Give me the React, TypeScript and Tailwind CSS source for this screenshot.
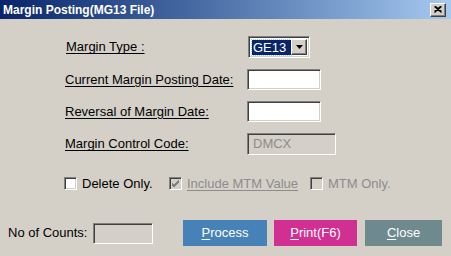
const sunken =
  'border border-t-[#808080] border-l-[#808080] border-r-white border-b-white shadow-[inset_1px_1px_0_#404040,inset_-1px_-1px_0_#d4d0c8]'
const raised =
  'border border-t-white border-l-white border-r-[#404040] border-b-[#404040] shadow-[inset_-1px_-1px_0_#808080]'

function Label({ children }: { children: React.ReactNode }) {
  return <span className="w-[182px] shrink-0 underline underline-offset-[2px]">{children}</span>
}

function Check({ checked, disabled, label, width }: { checked?: boolean; disabled?: boolean; label: string; width?: string }) {
  return (
    <div className={`flex items-center gap-[5px] ${width ?? ''}`}>
      <div className={`w-[13px] h-[13px] flex items-center justify-center ${sunken} ${disabled ? 'bg-[#d4d0c8]' : 'bg-white'}`}>
        {checked && (
          <svg width="9" height="9" viewBox="0 0 9 9">
            <path d="M1 4 L3 6 L8 1 M1 5 L3 7 L8 2 M1 6 L3 8 L8 3" stroke="#808080" strokeWidth="1" fill="none" />
          </svg>
        )}
      </div>
      <span className={disabled ? 'text-[#8c8c8c]' : 'text-black'}>
        {label === 'Include MTM Value' ? <span className="underline underline-offset-[2px]">{label}</span> : label}
      </span>
    </div>
  )
}

function Btn({ bg, k, rest, w }: { bg: string; k: string; rest: string; w: string }) {
  return (
    <button className={`${bg} ${w} h-[26px] text-white flex items-center justify-center text-[13px]`}>
      <span>
        <span className="underline underline-offset-[2px]">{k}</span>
        {rest}
      </span>
    </button>
  )
}

export default function App() {
  return (
    <div
      className="w-[451px] h-[256px] bg-[#d4d0c8] flex flex-col text-[13px] text-black overflow-hidden"
      style={{ fontFamily: '"Liberation Sans", Arial, sans-serif' }}
    >
      {/* title bar */}
      <div className="h-[19px] shrink-0 flex items-center justify-between pl-[3px] pr-[5px] bg-gradient-to-r from-[#0a246a] to-[#a6caf0]">
        <span className="text-white font-bold text-[12px] leading-none">Margin Posting(MG13 File)</span>
        <div className={`w-[16px] h-[14px] bg-[#d4d0c8] flex items-center justify-center ${raised}`}>
          <svg width="8" height="7" viewBox="0 0 8 7">
            <path d="M0.5 0.5 L7.5 6.5 M1.5 0.5 L7.5 5.5 M7.5 0.5 L0.5 6.5 M6.5 0.5 L0.5 5.5" stroke="#000" strokeWidth="1.2" fill="none" />
          </svg>
        </div>
      </div>

      {/* form */}
      <div className="flex flex-col pl-[65px]">
        <div className="flex items-center h-[22px] mt-[17px]">
          <span className="w-[183px] shrink-0 pl-[1px] underline underline-offset-[2px]">Margin Type :</span>
          <div className={`w-[62px] h-[22px] bg-white flex items-center p-[2px] ${sunken}`}>
            <div className="flex-1 h-full flex items-center pl-[1px]">
              <span className="bg-[#0a246a] text-white h-[15px] w-[39px] leading-[15px] pl-[1px] outline-1 outline-dotted outline-[#a6caf0]">GE13</span>
            </div>
            <div className={`w-[16px] h-full bg-[#d4d0c8] flex items-center justify-center ${raised}`}>
              <svg width="7" height="4" viewBox="0 0 7 4">
                <path d="M0 0 H7 L3.5 4 Z" fill="#000" />
              </svg>
            </div>
          </div>
        </div>

        <div className="flex items-center h-[21px] mt-[11px]">
          <Label>Current Margin Posting Date:</Label>
          <div className={`w-[74px] h-[21px] bg-white ${sunken}`} />
        </div>

        <div className="flex items-center h-[21px] mt-[11px]">
          <Label>Reversal of Margin Date:</Label>
          <div className={`w-[74px] h-[21px] bg-white ${sunken}`} />
        </div>

        <div className="flex items-center h-[22px] mt-[11px]">
          <Label>Margin Control Code:</Label>
          <div className={`w-[89px] h-[22px] bg-[#d4d0c8] flex items-center pl-[5px] text-[#8c8c8c] ${sunken}`}>DMCX</div>
        </div>

        <div className="flex items-center h-[13px] mt-[22px] -ml-[1px]">
          <Check label="Delete Only." width="w-[105px]" />
          <Check label="Include MTM Value" checked disabled width="w-[141px]" />
          <Check label="MTM Only." disabled />
        </div>
      </div>

      {/* bottom row */}
      <div className="flex items-center h-[26px] mt-[30px] pl-[8px]">
        <span className="w-[85px] shrink-0">No of Counts:</span>
        <div className={`w-[60px] h-[21px] bg-[#d4d0c8] ${sunken}`} />
        <div className="ml-[30px] flex items-center">
          <Btn bg="bg-[#4682b8]" k="P" rest="rocess" w="w-[84px]" />
          <div className="ml-[7px]">
            <Btn bg="bg-[#d22f92]" k="P" rest="rint(F6)" w="w-[83px]" />
          </div>
          <div className="ml-[8px]">
            <Btn bg="bg-[#6f8a8e]" k="C" rest="lose" w="w-[77px]" />
          </div>
        </div>
      </div>
    </div>
  )
}
